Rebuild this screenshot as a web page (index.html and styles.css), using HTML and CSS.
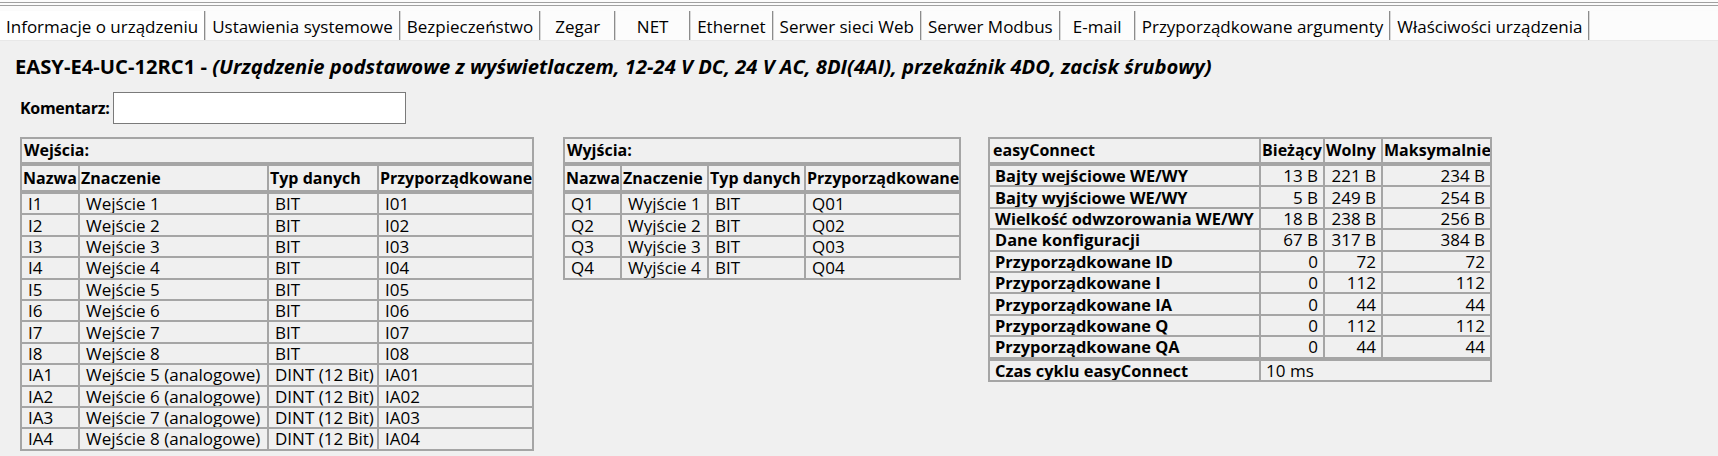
FILE: index.html
```html
<!DOCTYPE html>
<html lang="pl">
<head>
<meta charset="utf-8">
<title>Informacje o urządzeniu</title>
<link rel="stylesheet" href="styles.css">
</head>
<body>
<div class="window">
  <div class="topstrip"><div class="topline"></div></div>
  <div class="tabs">
    <div class="tab active">Informacje o urządzeniu</div>
    <div class="tab">Ustawienia systemowe</div>
    <div class="tab">Bezpieczeństwo</div>
    <div class="tab">Zegar</div>
    <div class="tab">NET</div>
    <div class="tab">Ethernet</div>
    <div class="tab">Serwer sieci Web</div>
    <div class="tab">Serwer Modbus</div>
    <div class="tab">E-mail</div>
    <div class="tab">Przyporządkowane argumenty</div>
    <div class="tab">Właściwości urządzenia</div>
  </div>
  <div class="content">
    <h1 class="title">EASY-E4-UC-12RC1 - <em>(Urządzenie podstawowe z wyświetlaczem, 12-24 V DC, 24 V AC, 8DI(4AI), przekaźnik 4DO, zacisk śrubowy)</em></h1>
    <div class="comment">
      <label class="comment-label" for="kom">Komentarz:</label>
      <input class="comment-input" id="kom" type="text">
    </div>
    <div class="tables">
      <table class="grid t-in">
        <colgroup><col class="c-in1"><col class="c-in2"><col class="c-in3"><col class="c-in4"></colgroup>
        <tr class="caption-row"><th colspan="4">Wejścia:</th></tr>
        <tr class="head-row"><th>Nazwa</th><th>Znaczenie</th><th>Typ danych</th><th>Przyporządkowane</th></tr>
        <tr class="first"><td>I1</td><td>Wejście 1</td><td>BIT</td><td>I01</td></tr>
        <tr><td>I2</td><td>Wejście 2</td><td>BIT</td><td>I02</td></tr>
        <tr><td>I3</td><td>Wejście 3</td><td>BIT</td><td>I03</td></tr>
        <tr><td>I4</td><td>Wejście 4</td><td>BIT</td><td>I04</td></tr>
        <tr><td>I5</td><td>Wejście 5</td><td>BIT</td><td>I05</td></tr>
        <tr><td>I6</td><td>Wejście 6</td><td>BIT</td><td>I06</td></tr>
        <tr><td>I7</td><td>Wejście 7</td><td>BIT</td><td>I07</td></tr>
        <tr><td>I8</td><td>Wejście 8</td><td>BIT</td><td>I08</td></tr>
        <tr><td>IA1</td><td>Wejście 5 (analogowe)</td><td>DINT (12 Bit)</td><td>IA01</td></tr>
        <tr><td>IA2</td><td>Wejście 6 (analogowe)</td><td>DINT (12 Bit)</td><td>IA02</td></tr>
        <tr><td>IA3</td><td>Wejście 7 (analogowe)</td><td>DINT (12 Bit)</td><td>IA03</td></tr>
        <tr><td>IA4</td><td>Wejście 8 (analogowe)</td><td>DINT (12 Bit)</td><td>IA04</td></tr>
      </table>

      <table class="grid t-out">
        <colgroup><col class="c-out1"><col class="c-out2"><col class="c-out3"><col class="c-out4"></colgroup>
        <tr class="caption-row"><th colspan="4">Wyjścia:</th></tr>
        <tr class="head-row"><th>Nazwa</th><th>Znaczenie</th><th>Typ danych</th><th>Przyporządkowane</th></tr>
        <tr class="first"><td>Q1</td><td>Wyjście 1</td><td>BIT</td><td>Q01</td></tr>
        <tr><td>Q2</td><td>Wyjście 2</td><td>BIT</td><td>Q02</td></tr>
        <tr><td>Q3</td><td>Wyjście 3</td><td>BIT</td><td>Q03</td></tr>
        <tr><td>Q4</td><td>Wyjście 4</td><td>BIT</td><td>Q04</td></tr>
      </table>

      <table class="grid t-ec">
        <colgroup><col class="c-ec1"><col class="c-ec2"><col class="c-ec3"><col class="c-ec4"></colgroup>
        <tr class="ec-head"><th>easyConnect</th><th>Bieżący</th><th>Wolny</th><th>Maksymalnie</th></tr>
        <tr class="first"><th>Bajty wejściowe WE/WY</th><td class="num">13 B</td><td class="num">221 B</td><td class="num">234 B</td></tr>
        <tr><th>Bajty wyjściowe WE/WY</th><td class="num">5 B</td><td class="num">249 B</td><td class="num">254 B</td></tr>
        <tr><th>Wielkość odwzorowania WE/WY</th><td class="num">18 B</td><td class="num">238 B</td><td class="num">256 B</td></tr>
        <tr><th>Dane konfiguracji</th><td class="num">67 B</td><td class="num">317 B</td><td class="num">384 B</td></tr>
        <tr><th>Przyporządkowane ID</th><td class="num">0</td><td class="num">72</td><td class="num">72</td></tr>
        <tr><th>Przyporządkowane I</th><td class="num">0</td><td class="num">112</td><td class="num">112</td></tr>
        <tr><th>Przyporządkowane IA</th><td class="num">0</td><td class="num">44</td><td class="num">44</td></tr>
        <tr><th>Przyporządkowane Q</th><td class="num">0</td><td class="num">112</td><td class="num">112</td></tr>
        <tr><th>Przyporządkowane QA</th><td class="num">0</td><td class="num">44</td><td class="num">44</td></tr>
        <tr class="first"><th>Czas cyklu easyConnect</th><td colspan="3" class="cycle">10 ms</td></tr>
      </table>
    </div>
  </div>
</div>
</body>
</html>
```

FILE: styles.css
```css
html, body {
  margin: 0;
  padding: 0;
}
body {
  background: #f0f0f0;
  font-family: "Open Sans", "Noto Sans", sans-serif;
  color: #000;
  width: 1718px;
  height: 456px;
  overflow: hidden;
}

.topstrip {
  background: #fbfbfb;
  height: 11px;
  padding-top: 2px;
  box-sizing: border-box;
}
.topline {
  height: 2px;
  border-top: 1px solid #a0a0a0;
  border-bottom: 1px solid #a0a0a0;
}

.tabs {
  display: flex;
  height: 29px;
  background: #fcfcfc;
  border-bottom: 1px solid #e8e8e8;
}
.tab {
  font-size: 17px;
  line-height: 27px;
  padding: 2px 6px 0 6px;
  min-width: 61px;
  text-align: center;
  border-right: 1px solid #8c8c8c;
  box-shadow: 1px 0 0 #d8d8d8;
  margin-right: 1px;
  white-space: nowrap;
}
.tab.active {
  background: #ffffff;
}

.content {
  padding: 0 0 0 15px;
}
.title {
  margin: 0;
  padding-top: 12px;
  font-size: 20.2px;
  line-height: 26px;
  font-weight: 700;
  white-space: nowrap;
}
.title em {
  font-style: italic;
}

.comment {
  display: flex;
  align-items: center;
  margin-top: 13px;
  padding-left: 5px;
  height: 32px;
}
.comment-label {
  font-size: 16px;
  font-weight: 700;
  letter-spacing: -0.3px;
}
.comment-input {
  margin: 0 0 0 4px;
  width: 293px;
  height: 32px;
  box-sizing: border-box;
  border: 1px solid #7a7a7a;
  background: #fff;
  padding: 0 4px;
  font: inherit;
}

.tables {
  display: flex;
  align-items: flex-start;
  margin-top: 13px;
  padding-left: 5px;
}

.grid {
  border-collapse: separate;
  border-spacing: 0;
  table-layout: fixed;
  border: 1px solid #a5a5a5;
  font-size: 17px;
}
.grid th, .grid td {
  border: 1px solid #a5a5a5;
  height: 19.4px;
  line-height: 19px;
  padding: 0 0 0 6px;
  white-space: nowrap;
  overflow: hidden;
  text-align: left;
  vertical-align: middle;
}
.grid th {
  font-weight: 700;
  font-size: 16px;
}
.grid .caption-row th {
  height: 23px;
  padding-left: 2px;
}
.grid .head-row th {
  height: 24px;
  padding-left: 1px;
  border-top: 3px solid #a5a5a5;
}
.grid .first td, .grid .first th {
  border-top: 3px solid #a5a5a5;
}
.grid .ec-head th {
  height: 23px;
  padding-left: 1px;
}

.t-in { width: 514px; }
.c-in1 { width: 58px; }
.c-in2 { width: 189px; }
.c-in3 { width: 110px; }
.c-in4 { width: 155px; }

.t-out { width: 398px; margin-left: 29px; }
.c-out1 { width: 57px; }
.c-out2 { width: 87px; }
.c-out3 { width: 97px; }
.c-out4 { width: 155px; }

.t-ec { width: 504px; margin-left: 27px; }
.c-ec1 { width: 271px; }
.c-ec2 { width: 64px; }
.c-ec3 { width: 58px; }
.c-ec4 { width: 109px; }

.t-ec tr > th:first-child { padding-left: 5px; font-size: 16.4px; }
.t-ec .ec-head th:first-child { font-size: 16px; padding-left: 3px; }
.t-ec .num {
  text-align: right;
  padding: 0 5px 0 0;
}
.t-ec .cycle {
  padding-left: 5px;
}
```
